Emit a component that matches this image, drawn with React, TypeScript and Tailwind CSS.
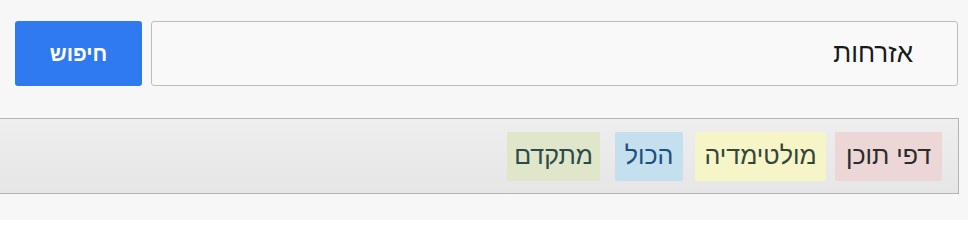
import React from 'react';

const tabs = [
  { label: 'דפי תוכן', w: 'w-[107px]', bg: 'bg-[#ecd6d6]', fg: 'text-[#2b2b2b]', gap: 'ml-[9px]' },
  { label: 'מולטימדיה', w: 'w-[131px]', bg: 'bg-[#f6f5c8]', fg: 'text-[#34463a]', gap: 'ml-[12px]' },
  { label: 'הכול', w: 'w-[68px]', bg: 'bg-[#c4e0ee]', fg: 'text-[#1d4f80]', gap: 'ml-[15px]' },
  { label: 'מתקדם', w: 'w-[93px]', bg: 'bg-[#dfe6c9]', fg: 'text-[#2d4a4a]', gap: 'ml-0' },
];

const App: React.FC = () => {
  return (
    <div
      dir="rtl"
      className="w-[968px] h-[220px] bg-[#f7f7f7] pt-[21px] font-['Liberation_Sans','DejaVu_Sans',sans-serif]"
    >
      <div className="flex items-start pr-[10px] gap-[9px]">
        <div className="w-[807px] h-[65px] bg-[#f9f9f9] border border-[#bdbdbd] rounded-[3px] flex items-center pr-[44px] text-[26px] text-[#1a1a1a]">
          אזרחות
        </div>
        <button className="w-[127px] h-[65px] bg-[#2f7af0] rounded-[3px] text-white font-bold text-[21px]">
          חיפוש
        </button>
      </div>

      <div className="mt-[32px] mr-[9px] h-[76px] border border-r border-l-0 border-[#b3b3b3] bg-gradient-to-b from-[#eeeeee] to-[#e6e6e6] flex items-center pr-[16px]">
        {tabs.map((t) => (
          <div
            key={t.label}
            className={`${t.w} ${t.bg} ${t.fg} ${t.gap} h-[49px] flex items-center justify-center text-[25px] rounded-[2px]`}
          >
            {t.label}
          </div>
        ))}
      </div>
    </div>
  );
};

export default App;
